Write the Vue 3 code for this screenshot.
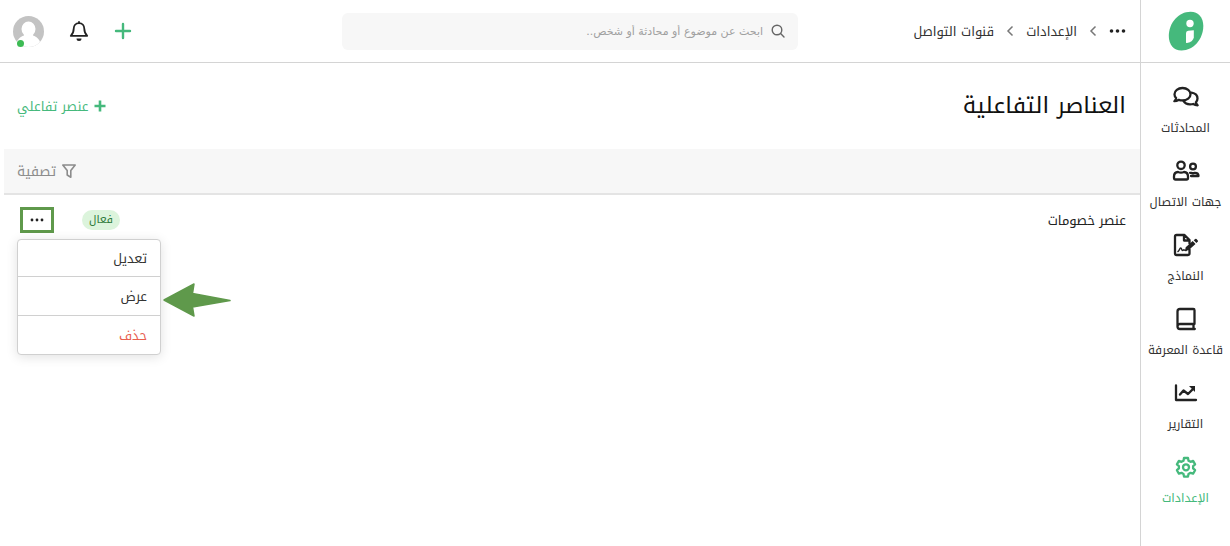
<script setup>
import { ref } from 'vue'

const navItems = [
  { id: 'chats', label: 'المحادثات' },
  { id: 'contacts', label: 'جهات الاتصال' },
  { id: 'forms', label: 'النماذج' },
  { id: 'knowledge', label: 'قاعدة المعرفة' },
  { id: 'reports', label: 'التقارير' },
  { id: 'settings', label: 'الإعدادات' },
]
const active = ref('settings')
const menuOpen = ref(true)
const query = ref('')
</script>

<template>
  <div class="app" dir="rtl" lang="ar">
    <aside class="sidebar">
      <a class="logo" href="#" aria-label="الرئيسية">
        <svg width="36" height="40" viewBox="0 0 36 40">
          <path d="M22.500 .8C30.500 .8 35.300 6.500 35.300 15 35.300 28 25.500 39.500 13.500 39.500 5.500 39.500 .8 33.500 .8 25 .8 12 10.500 .8 22.500 .8z" fill="#45b97c" />
          <circle cx="22" cy="12.500" r="3.700" fill="#fff" />
          <path d="M18 22.300q0-2.300 2.200-2.500l5.600-.5v7q-.5 4.700-6.800 5.800-1 .1-1-.9z" fill="#fff" />
        </svg>
      </a>
      <nav class="nav">
        <a
          v-for="item in navItems"
          :key="item.id"
          href="#"
          class="nav-item"
          :class="{ active: active === item.id }"
          @click.prevent="active = item.id"
        >
          <svg v-if="item.id === 'chats'" width="26" height="24" viewBox="0 0 26 24" class="line">
            <path d="M9.500 3C4.900 3 1.500 5.700 1.500 9.200c0 1.500.6 2.800 1.600 3.900-.2 1.100-.8 2.200-1.700 3.100 1.700 0 3.200-.6 4.400-1.400 1.100.4 2.400.6 3.700.6 4.600 0 8-2.700 8-6.200S14.100 3 9.500 3z" />
            <path d="M18.500 7.700c3.500.6 6 2.900 6 5.800 0 1.400-.6 2.700-1.600 3.700.2 1.100.8 2.200 1.700 3.100-1.700 0-3.200-.5-4.400-1.300-1.100.3-2.200.5-3.300.4-2.800-.1-5.200-1.400-6.300-3.300" />
          </svg>
          <svg v-else-if="item.id === 'contacts'" width="28" height="24" viewBox="0 0 28 24" class="line">
            <circle cx="9" cy="6.300" r="3.700" />
            <circle cx="21" cy="7.500" r="2.900" />
            <path d="M6 13c1 .5 2 .7 3 .7s2-.2 3-.7c2.500.2 4 2 4 4.400v1.600q0 1.500-1.500 1.500h-11Q2 20.500 2 19v-1.600C2 15 3.500 13.200 6 13z" />
            <path d="M18 13.800h1c1.300.6 2.700.6 4 0 2.100 0 3.500 1.500 3.500 3.200H19" />
          </svg>
          <svg v-else-if="item.id === 'forms'" width="26" height="24" viewBox="0 0 26 24" class="line">
            <path d="M16.500 16.500v4q0 1.500-1.500 1.500H3.500Q2 22 2 20.500v-17Q2 2 3.500 2H11.500l5 5v3.500M11 2v5.500H16.500" />
            <path d="M5 18.500c1.500-.5 1.500-3.500 2.700-3.500s.8 2.600 1.800 2.600 1-1.300 1.800-.6 1.200.6 1.900.6" stroke-width="1.500" />
            <path d="M12 17.800l.7-3.600 7-6.200 2.800 3-7 6.200zM20.700 7.200l1.500-1.300q.7-.5 1.300.1l1.300 1.400q.6.700-.1 1.300l-1.300 1.200z" fill="currentColor" stroke="none" />
          </svg>
          <svg v-else-if="item.id === 'knowledge'" width="24" height="24" viewBox="0 0 24 24" class="line">
            <path d="M20.500 17V3.200q0-1.200-1.200-1.200H6Q3.500 2 3.500 4.500v15M20.500 17H6q-2.500 0-2.500 2.500T6 22h14.800M19.500 17v5" />
          </svg>
          <svg v-else-if="item.id === 'reports'" width="24" height="24" viewBox="0 0 24 24" class="line">
            <path d="M2 4.500V19h20" />
            <path d="M6 13.500l3.500-4 4.500 3.500 4.500-4.500" stroke-width="2.400" />
            <path d="M15 5h6v6z" fill="currentColor" stroke="none" />
          </svg>
          <svg v-else width="24" height="24" viewBox="0 0 24 24" class="line">
            <path d="M10 3h4l.5 2.700 2 1.100 2.600-.9 2 3.500-2 1.800v2.200l2 1.800-2 3.500-2.600-.9-2 1.100-.5 2.700h-4l-.5-2.700-2-1.100-2.600.9-2-3.500 2-1.800v-2.200l-2-1.800 2-3.500 2.600.9 2-1.100z" />
            <circle cx="12" cy="12.300" r="3" />
          </svg>
          <span>{{ item.label }}</span>
        </a>
      </nav>
    </aside>

    <div class="page">
      <header class="topbar">
        <nav class="crumbs" aria-label="مسار التنقل">
          <button type="button" class="icon-btn" aria-label="المزيد">
            <svg width="17" height="6" viewBox="0 0 17 6" fill="#222">
              <circle cx="2.500" cy="3" r="1.800" /><circle cx="8.500" cy="3" r="1.800" /><circle cx="14.500" cy="3" r="1.800" />
            </svg>
          </button>
          <svg class="chev" width="8" height="12" viewBox="0 0 8 12"><path d="M6.500 1.500L2 6l4.500 4.500" /></svg>
          <a href="#">الإعدادات</a>
          <svg class="chev" width="8" height="12" viewBox="0 0 8 12"><path d="M6.500 1.500L2 6l4.500 4.500" /></svg>
          <a href="#">قنوات التواصل</a>
        </nav>
        <label class="search">
          <svg width="14" height="14" viewBox="0 0 14 14" fill="none" stroke="#666" stroke-width="1.400" stroke-linecap="round">
            <circle cx="6" cy="6" r="4.800" /><path d="M9.600 9.600L13 13" />
          </svg>
          <input v-model="query" type="text" aria-label="بحث" placeholder="ابحث عن موضوع أو محادثة أو شخص.." />
        </label>
        <div class="actions">
          <button type="button" class="icon-btn" aria-label="إضافة">
            <svg width="18" height="18" viewBox="0 0 18 18" stroke="#45b97c" stroke-width="2.400" stroke-linecap="round"><path d="M9 2v14M2 9h14" /></svg>
          </button>
          <button type="button" class="icon-btn" aria-label="الإشعارات">
            <svg width="20" height="22" viewBox="0 0 20 22" fill="none" stroke="#222" stroke-width="1.800" stroke-linejoin="round">
              <path d="M10 3.200c-3.400 0-5.300 2.500-5.300 5.600 0 4-1.200 5.300-2.900 7h16.400c-1.700-1.700-2.900-3-2.900-7 0-3.100-1.900-5.600-5.300-5.600zM10 1.200v2" />
              <path d="M7.500 18.500h5a2.500 2.500 0 0 1-5 0z" fill="#222" stroke="none" />
            </svg>
          </button>
          <button type="button" class="icon-btn avatar" aria-label="الحساب">
            <svg width="31" height="31" viewBox="0 0 31 31">
              <defs><clipPath id="avatar-clip"><circle cx="15.500" cy="15.500" r="15.500" /></clipPath></defs>
              <g clip-path="url(#avatar-clip)">
                <rect width="31" height="31" fill="#c3c3c3" />
                <ellipse cx="15.500" cy="13" rx="7" ry="7.500" fill="#fff" />
                <path d="M11 17h9v2.500c4 1.500 6.500 3.500 7.500 8V31H3.500v-3.500c1-4.500 3.500-6.500 7.500-8z" fill="#fff" />
              </g>
            </svg>
            <span class="online"></span>
          </button>
        </div>
      </header>

      <main>
        <div class="heading">
          <h1>العناصر التفاعلية</h1>
          <button type="button" class="add">
            <svg width="12" height="12" viewBox="0 0 12 12" stroke="currentColor" stroke-width="2.600"><path d="M6 .5v11M.5 6h11" /></svg>
            عنصر تفاعلي
          </button>
        </div>
        <div class="filterbar">
          <button type="button" class="filter">
            <svg width="14" height="14" viewBox="0 0 14 14" fill="none" stroke="currentColor" stroke-width="1.600" stroke-linejoin="round">
              <path d="M.8 1h12.400L8.800 6.500v6.700L5.200 11V6.500z" />
            </svg>
            تصفية
          </button>
        </div>
        <div class="row">
          <span class="name">عنصر خصومات</span>
          <span class="badge">فعال</span>
          <div class="row-menu">
            <button type="button" class="dots" aria-label="خيارات" :aria-expanded="menuOpen" @click="menuOpen = !menuOpen">
              <svg width="14" height="4" viewBox="0 0 14 4" fill="#222">
                <circle cx="2" cy="2" r="1.400" /><circle cx="7" cy="2" r="1.400" /><circle cx="12" cy="2" r="1.400" />
              </svg>
            </button>
            <div v-if="menuOpen" class="menu">
              <button type="button">تعديل</button>
              <button type="button">عرض</button>
              <button type="button" class="danger">حذف</button>
            </div>
            <svg v-if="menuOpen" class="pointer" width="68" height="34" viewBox="0 0 68 34" aria-hidden="true">
              <path d="M1 17L31 1l-1.500 9.500L67 17.500 29.500 24l1.500 9z" fill="#5f994b" stroke="#5f994b" stroke-width="1.500" stroke-linejoin="round" />
            </svg>
          </div>
        </div>
      </main>
    </div>
  </div>
</template>

<style>
body {
  margin: 0;
  background: #fff;
}
</style>

<style scoped>
.app {
  display: flex;
  min-height: 100vh;
  font-family: "Noto Kufi Arabic", "Noto Sans Arabic", "DejaVu Sans", sans-serif;
  font-size: 13px;
  color: #333;
}
* {
  box-sizing: border-box;
}
button,
input {
  font: inherit;
  color: inherit;
  border: 0;
  padding: 0;
  margin: 0;
  background: none;
}
button {
  cursor: pointer;
}
a {
  color: inherit;
  text-decoration: none;
}
svg {
  display: block;
  flex: none;
}
.sidebar {
  flex: none;
  width: 90px;
  border-left: 1px solid #d4d4d4;
}
.logo {
  display: flex;
  align-items: center;
  justify-content: center;
  height: 63px;
  border-bottom: 1px solid #d4d4d4;
}
.nav {
  display: flex;
  flex-direction: column;
  gap: 21px;
  padding-top: 22px;
}
.nav-item {
  display: flex;
  flex-direction: column;
  align-items: center;
  gap: 9px;
  font-size: 12px;
  line-height: 20px;
  white-space: nowrap;
}
.nav-item svg {
  color: #222;
}
.nav-item.active,
.nav-item.active svg {
  color: #45b97c;
}
.line {
  fill: none;
  stroke: currentColor;
  stroke-width: 2.3;
  stroke-linejoin: round;
  stroke-linecap: round;
}
.page {
  flex: 1;
  min-width: 0;
}
.topbar {
  display: grid;
  grid-template-columns: 1fr 40% 1fr;
  align-items: center;
  height: 63px;
  border-bottom: 1px solid #d4d4d4;
}
.crumbs {
  display: flex;
  align-items: center;
  gap: 12px;
  padding-right: 14px;
  white-space: nowrap;
}
.chev {
  fill: none;
  stroke: #777;
  stroke-width: 1.5;
}
.search {
  display: flex;
  align-items: center;
  gap: 8px;
  height: 37px;
  padding: 0 13px;
  border-radius: 6px;
  background: #f7f7f7;
}
.search input {
  flex: 1;
  min-width: 0;
  outline: 0;
  font-family: "DejaVu Sans", sans-serif;
  font-size: 11px;
}
.search input::placeholder {
  color: #a0a0a0;
  opacity: 1;
}
.actions {
  display: flex;
  align-items: center;
  justify-content: flex-end;
  gap: 25px;
  padding-left: 13px;
}
.avatar {
  position: relative;
}
.online {
  position: absolute;
  left: 4px;
  bottom: 0;
  width: 7px;
  height: 7px;
  border-radius: 50%;
  background: #3dbb54;
}
.heading {
  display: flex;
  align-items: center;
  justify-content: space-between;
  height: 86px;
  padding: 0 14px 0 17px;
}
h1 {
  margin: 0;
  font-size: 23px;
  font-weight: 400;
  line-height: 32px;
  color: #111;
}
.add {
  display: flex;
  align-items: center;
  gap: 5px;
  color: #45b97c;
}
.filterbar {
  display: flex;
  align-items: center;
  justify-content: flex-end;
  height: 46px;
  margin-left: 4px;
  padding-left: 13px;
  background: #f7f7f7;
  border-bottom: 2px solid #e4e4e4;
}
.filter {
  display: flex;
  align-items: center;
  gap: 6px;
  font-size: 14px;
  color: #8c8c8c;
}
.row {
  display: flex;
  align-items: center;
  height: 50px;
  padding: 0 14px 0 20px;
}
.name {
  flex: 1;
  color: #222;
}
.badge {
  padding: 0 7px;
  border-radius: 10px;
  background: #dcf4dc;
  color: #2f7a3a;
  font-size: 11px;
  line-height: 20px;
}
.row-menu {
  position: relative;
  margin-right: 28px;
}
.dots {
  display: flex;
  align-items: center;
  justify-content: center;
  width: 34px;
  height: 26px;
  border: 3px solid #5f994b;
}
.menu {
  position: absolute;
  top: 32px;
  left: -3px;
  width: 144px;
  border: 1px solid #d0d0d0;
  border-radius: 4px;
  background: #fff;
  box-shadow: 0 2px 12px rgba(0, 0, 0, 0.12);
}
.menu button {
  display: block;
  width: 100%;
  height: 36px;
  padding: 0 13px;
  text-align: right;
}
.menu button + button {
  height: 39px;
  border-top: 1px solid #d0d0d0;
}
.menu .danger {
  color: #e8604f;
}
.pointer {
  position: absolute;
  top: 76px;
  left: 143px;
}
</style>
